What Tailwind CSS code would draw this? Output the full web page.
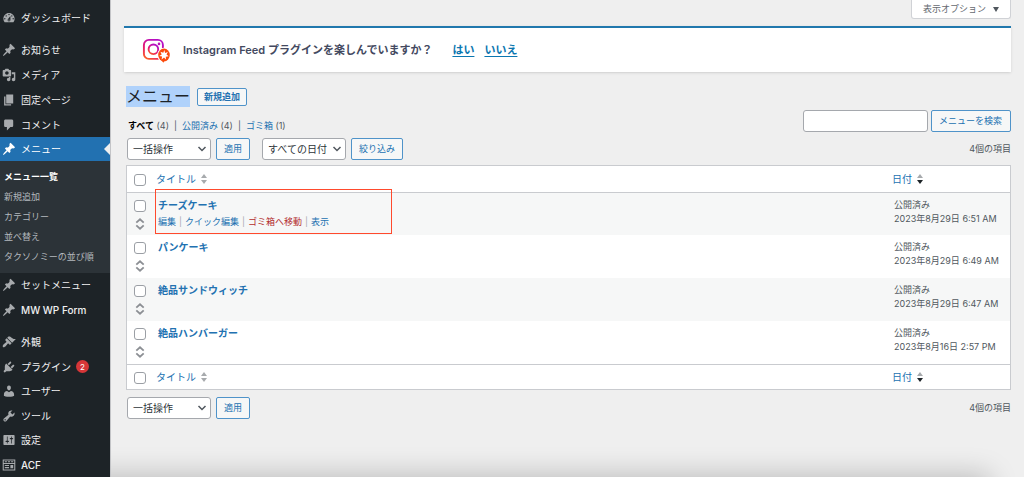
<!DOCTYPE html>
<html lang="ja">
<head>
<meta charset="utf-8">
<title>メニュー</title>
<meta name="viewport" content="width=device-width, initial-scale=1">
<script src="https://cdn.jsdelivr.net/npm/@tailwindcss/browser@4"></script>
</head>
<body class="flex min-h-screen bg-[#efefef] font-['Inter','Noto_Sans_CJK_JP',sans-serif] text-[9px] leading-[14px] text-[#50575e]">
<svg class="hidden" aria-hidden="true">
  <symbol id="i-dash" viewBox="0 0 20 20"><path fill-rule="evenodd" d="M3.76 16h12.48c1.1-1.37 1.76-3.11 1.76-5 0-4.42-3.58-8-8-8s-8 3.58-8 8c0 1.89.66 3.63 1.76 5zM10 4c.55 0 1 .45 1 1s-.45 1-1 1-1-.45-1-1 .45-1 1-1zM6 6c.55 0 1 .45 1 1s-.45 1-1 1-1-.45-1-1 .45-1 1-1zm8 0c.55 0 1 .45 1 1s-.45 1-1 1-1-.45-1-1 .45-1 1-1zm-5.37 5.55L12 7v6c0 1.1-.9 2-2 2s-2-.9-2-2c0-.57.24-1.08.63-1.45zM4 10c.55 0 1 .45 1 1s-.45 1-1 1-1-.45-1-1 .45-1 1-1zm12 0c.55 0 1 .45 1 1s-.45 1-1 1-1-.45-1-1 .45-1 1-1zm-5 3c0-.55-.45-1-1-1s-1 .45-1 1 .45 1 1 1 1-.45 1-1z"/></symbol>
  <symbol id="i-pin" viewBox="0 0 20 20"><path d="M10.44 3.02l1.82-1.82 6.36 6.35-1.83 1.82c-1.05-.68-2.48-.57-3.41.36l-.75.75c-.92.93-1.04 2.35-.35 3.41l-1.83 1.82-2.41-2.41-2.8 2.79c-.42.42-3.38 2.71-3.8 2.29s1.86-3.39 2.28-3.81l2.79-2.79L4.1 9.36l1.83-1.82c1.05.69 2.48.57 3.4-.36l.75-.75c.93-.92 1.05-2.35.36-3.41z"/></symbol>
  <symbol id="i-media" viewBox="0 0 20 20"><path fill-rule="evenodd" d="M13 11V4c0-.55-.45-1-1-1h-1.67L9 1H5L3.67 3H2c-.55 0-1 .45-1 1v7c0 .55.45 1 1 1h10c.55 0 1-.45 1-1zM7 4.5c1.38 0 2.5 1.12 2.5 2.5S8.38 9.5 7 9.5 4.5 8.38 4.5 7 5.62 4.5 7 4.5zM14 6h5v10.5c0 1.38-1.12 2.5-2.5 2.5S14 17.88 14 16.5s1.12-2.5 2.5-2.5c.17 0 .34.02.5.05V9h-3V6zm-4 8.05V13h2v3.5c0 1.38-1.12 2.5-2.5 2.5S7 17.88 7 16.5 8.12 14 9.5 14c.17 0 .34.02.5.05z"/></symbol>
  <symbol id="i-page" viewBox="0 0 20 20"><path d="M6 15V2h10v13H6zm-1 1h8v2H3V5h2v11z"/></symbol>
  <symbol id="i-comment" viewBox="0 0 20 20"><path d="M5 2h9c1.1 0 2 .9 2 2v7c0 1.1-.9 2-2 2h-2l-5 5v-5H5c-1.1 0-2-.9-2-2V4c0-1.1.9-2 2-2z"/></symbol>
  <symbol id="i-brush" viewBox="0 0 20 20"><path d="M14.48 11.06L7.41 3.99l1.5-1.5c.5-.56 2.3-.47 3.51.32 1.21.8 1.43 1.28 2.91 2.1 1.18.64 2.45 1.26 4.45.85zm-.71.71L6.7 4.7 4.93 6.47c-.39.39-.39 1.02 0 1.41l1.06 1.06c.39.39.39 1.03 0 1.42-.6.6-1.43 1.11-2.21 1.69-.35.26-.7.53-1.01.84C1.43 14.23.4 16.08 1.4 17.07c.99 1 2.84-.03 4.18-1.36.31-.31.58-.66.85-1.02.57-.78 1.08-1.61 1.69-2.21.39-.39 1.02-.39 1.41 0l1.06 1.06c.39.39 1.02.39 1.41 0z"/></symbol>
  <symbol id="i-plug" viewBox="0 0 20 20"><path d="M13.11 4.36L9.87 7.6 8 5.73l3.24-3.24c.35-.34 1.05-.2 1.56.32.52.51.66 1.21.31 1.55zm-8 1.77l.91-1.12 9.01 9.01-1.19.84c-.71.71-2.63 1.16-3.82 1.16H6.14L4.9 17.26c-.59.59-1.54.59-2.12 0-.59-.58-.59-1.53 0-2.12l1.24-1.24v-3.88c0-1.13.4-3.19 1.09-3.89zm7.26 3.97l3.24-3.24c.34-.35 1.04-.21 1.55.31.52.51.66 1.21.31 1.55l-3.24 3.25z"/></symbol>
  <symbol id="i-user" viewBox="0 0 20 20"><path d="M10 9.25c-2.27 0-2.73-3.44-2.73-3.44C7 4.02 7.82 2 9.97 2c2.16 0 2.98 2.02 2.71 3.81 0 0-.41 3.44-2.68 3.44zm0 2.57L12.72 10c2.39 0 4.52 2.33 4.52 4.53v2.49s-3.65 1.13-7.24 1.13c-3.65 0-7.24-1.13-7.24-1.13v-2.49c0-2.25 1.94-4.48 4.47-4.48z"/></symbol>
  <symbol id="i-tool" viewBox="0 0 20 20"><path fill-rule="evenodd" d="M16.68 9.77c-1.34 1.34-3.3 1.67-4.95.99l-5.41 6.52c-.99.99-2.59.99-3.58 0s-.99-2.59 0-3.57l6.52-5.42c-.68-1.65-.35-3.61.99-4.95 1.28-1.28 3.12-1.62 4.72-1.06l-2.89 2.89 2.82 2.82 2.86-2.87c.53 1.58.18 3.39-1.08 4.65zM3.81 16.21c.4.39 1.04.39 1.43 0 .4-.4.4-1.04 0-1.43-.39-.4-1.03-.4-1.43 0-.39.39-.39 1.03 0 1.43z"/></symbol>
  <symbol id="i-set" viewBox="0 0 20 20"><path fill-rule="evenodd" d="M18 16V4c0-.55-.45-1-1-1H3c-.55 0-1 .45-1 1v12c0 .55.45 1 1 1h14c.55 0 1-.45 1-1zM8 11h1c.55 0 1 .45 1 1s-.45 1-1 1H8v1.5c0 .28-.22.5-.5.5s-.5-.22-.5-.5V13H6c-.55 0-1-.45-1-1s.45-1 1-1h1V5.5c0-.28.22-.5.5-.5s.5.22.5.5V11zm5-2h-1c-.55 0-1-.45-1-1s.45-1 1-1h1V5.5c0-.28.22-.5.5-.5s.5.22.5.5V7h1c.55 0 1 .45 1 1s-.45 1-1 1h-1v5.500c0 .28-.22.5-.5.5s-.5-.22-.5-.5V9z"/></symbol>
  <symbol id="i-acf" viewBox="0 0 20 20"><path fill-rule="evenodd" d="M1 2h18v16H1zM2.500 3.500V7h15V3.500zM2.500 8.500v8h15v-8z"/><path d="M4 4.500h3v1.500H4zM8.500 4.500h3v1.500h-3zM13 4.500h3v1.500h-3zM4 10h6v1.500H4zM4 13h6v1.500H4zM12 10h4v4.500h-4z"/></symbol>
  <symbol id="i-down" viewBox="0 0 10 10"><path d="M1.500 3l3.500 3.500L8.500 3" fill="none" stroke="#50575e" stroke-width="1.500"/></symbol>
  <symbol id="i-updown" viewBox="0 0 10 12"><path d="M1.300 4.700L5 1.300l3.700 3.400M1.300 7.300L5 10.700l3.700-3.400" fill="none" stroke="#8c8f94" stroke-width="1.800"/></symbol>
  <symbol id="i-sort" viewBox="0 0 6 10"><path d="M0 4l3-4 3 4z" fill="#a7aaad"/><path d="M0 6h6l-3 4z" fill="currentColor"/></symbol>
</svg>

<aside class="w-[110px] shrink-0 bg-[#1d2327] pt-[6px] text-[10px] text-[#f0f0f1]">
  <nav aria-label="管理メニュー">
    <ul>
      <li><a href="#" class="flex h-6 items-center gap-[5px] pl-[2px]"><svg class="size-[14px] fill-[#a7aaad]"><use href="#i-dash"/></svg>ダッシュボード</a></li>
      <li class="mt-[7px]"><a href="#" class="flex h-[25px] items-center gap-[5px] pl-[2px]"><svg class="size-[14px] fill-[#a7aaad]"><use href="#i-pin"/></svg>お知らせ</a></li>
      <li><a href="#" class="flex h-[25px] items-center gap-[5px] pl-[2px]"><svg class="size-[14px] fill-[#a7aaad]"><use href="#i-media"/></svg>メディア</a></li>
      <li><a href="#" class="flex h-[25px] items-center gap-[5px] pl-[2px]"><svg class="size-[14px] fill-[#a7aaad]"><use href="#i-page"/></svg>固定ページ</a></li>
      <li><a href="#" class="flex h-[25px] items-center gap-[5px] pl-[2px]"><svg class="size-[14px] fill-[#a7aaad]"><use href="#i-comment"/></svg>コメント</a></li>
      <li>
        <a href="#" class="flex h-6 items-center gap-[5px] bg-[#2271b1] pl-[2px] text-white"><svg class="size-[14px] fill-white"><use href="#i-pin"/></svg>メニュー<svg class="ml-auto h-3 w-[6px] fill-[#efefef]" viewBox="0 0 6 12"><path d="M6 0v12L0 6z"/></svg></a>
        <ul class="bg-[#2c3338] py-[6px] text-[9px] text-[#b4b9be]">
          <li><a href="#" class="flex h-5 items-center pl-1 font-bold text-white">メニュー一覧</a></li>
          <li><a href="#" class="flex h-5 items-center pl-1">新規追加</a></li>
          <li><a href="#" class="flex h-5 items-center pl-1">カテゴリー</a></li>
          <li><a href="#" class="flex h-5 items-center pl-1">並べ替え</a></li>
          <li><a href="#" class="flex h-5 items-center pl-1">タクソノミーの並び順</a></li>
        </ul>
      </li>
      <li><a href="#" class="flex h-6 items-center gap-[5px] pl-[2px]"><svg class="size-[14px] fill-[#a7aaad]"><use href="#i-pin"/></svg>セットメニュー</a></li>
      <li><a href="#" class="flex h-[25px] items-center gap-[5px] pl-[2px] font-medium"><svg class="size-[14px] fill-[#a7aaad]"><use href="#i-pin"/></svg>MW WP Form</a></li>
      <li class="mt-2"><a href="#" class="flex h-6 items-center gap-[5px] pl-[2px]"><svg class="size-[14px] fill-[#a7aaad]"><use href="#i-brush"/></svg>外観</a></li>
      <li><a href="#" class="flex h-[25px] items-center gap-[5px] pl-[2px]"><svg class="size-[14px] fill-[#a7aaad]"><use href="#i-plug"/></svg>プラグイン<span class="flex size-[13px] items-center justify-center rounded-full bg-[#d63638] text-[8px] text-white">2</span></a></li>
      <li><a href="#" class="flex h-6 items-center gap-[5px] pl-[2px]"><svg class="size-[14px] fill-[#a7aaad]"><use href="#i-user"/></svg>ユーザー</a></li>
      <li><a href="#" class="flex h-[25px] items-center gap-[5px] pl-[2px]"><svg class="size-[14px] fill-[#a7aaad]"><use href="#i-tool"/></svg>ツール</a></li>
      <li><a href="#" class="flex h-6 items-center gap-[5px] pl-[2px]"><svg class="size-[14px] fill-[#a7aaad]"><use href="#i-set"/></svg>設定</a></li>
      <li><a href="#" class="flex h-[25px] items-center gap-[5px] pl-[2px] font-medium"><svg class="size-[14px] fill-[#a7aaad]"><use href="#i-acf"/></svg>ACF</a></li>
    </ul>
  </nav>
</aside>

<main class="relative flex min-w-0 flex-1 flex-col border-l border-[#c3c4c7] pr-[13px] pl-[13px]">
  <div class="flex justify-end">
    <button type="button" class="flex h-[19px] items-center gap-[7px] rounded-b-[3px] border border-t-0 border-[#d0d2d6] bg-white px-[11px] text-[#646970]">表示オプション<svg class="h-[5px] w-[6px] fill-[#50575e]" viewBox="0 0 6 5"><path d="M0 0h6L3 5z"/></svg></button>
  </div>

  <section class="mt-[7px] flex h-[46px] items-center border-t-2 border-[#2178ad] bg-white pl-[18px] text-[11px] font-semibold text-[#434960] shadow-sm">
    <svg class="h-[26px] w-[29px]" viewBox="0 0 29 26" aria-hidden="true">
      <defs><linearGradient id="ig" x1="0" y1="1" x2="0.600" y2="0"><stop offset="0" stop-color="#ff6a1a"/><stop offset="0.450" stop-color="#e6186d"/><stop offset="1" stop-color="#b50fc4"/></linearGradient></defs>
      <rect x="1.900" y="2.900" width="19" height="19" rx="5" fill="none" stroke="url(#ig)" stroke-width="1.900"/>
      <circle cx="11.400" cy="12.300" r="4.800" fill="none" stroke="url(#ig)" stroke-width="1.900"/>
      <circle cx="17" cy="6.900" r="1.300" fill="#b915b5"/>
      <ellipse cx="22" cy="18" rx="6.700" ry="7.300" fill="#fff"/>
      <ellipse cx="22" cy="18" rx="5.800" ry="6.400" fill="#fb4a0c"/>
      <path d="M19.500 23.500l2 2.300.8-2z" fill="#fb4a0c"/>
      <path d="M22.300 13l.8 2.900 2.800-.9-1.400 2.500 2.200 1.800-2.900.4.200 2.900-2-2-2.400 1.900.5-2.900-2.900-.6 2.500-1.600-1.300-2.600 2.900.9z" fill="#fff"/>
    </svg>
    <p class="ml-3">Instagram Feed プラグインを楽しんでいますか？</p>
    <a href="#" class="ml-5 font-bold text-[#0b76b0] underline underline-offset-2">はい</a>
    <a href="#" class="ml-[10px] font-bold text-[#0b76b0] underline underline-offset-2">いいえ</a>
  </section>

  <div class="mt-[14px] flex items-center gap-[7px] pl-[2px]">
    <h1 class="bg-[#b0d2fb] text-[16px] leading-[21px] text-[#1d2327]">メニュー</h1>
    <a href="#" class="flex h-[18px] items-center rounded-[2px] border border-[#4f93c9] bg-[#f6f7f7] px-[6px] font-semibold text-[#2271b1]">新規追加</a>
  </div>

  <div class="flex items-start justify-between pl-[2px]">
    <ul class="mt-3 flex gap-[5px] pl-[2px]">
      <li><a href="#" class="font-bold text-black">すべて</a> (4)</li>
      <li aria-hidden="true">|</li>
      <li><a href="#" class="text-[#2271b1]">公開済み</a> (4)</li>
      <li aria-hidden="true">|</li>
      <li><a href="#" class="text-[#2271b1]">ゴミ箱</a> (1)</li>
    </ul>
    <form class="mt-[3px] flex gap-[3px]">
      <input type="search" aria-label="メニューを検索" class="h-[22px] w-[125px] rounded-[3px] border border-[#a5a8ad] bg-white px-2">
      <button type="button" class="h-[22px] rounded-[2px] border border-[#4f93c9] bg-[#f6f7f7] pr-2 pl-[7px] text-[#2271b1]">メニューを検索</button>
    </form>
  </div>

  <div class="mt-[5px] flex items-center pl-[3px]">
    <div class="relative">
      <select aria-label="一括操作を選択" class="block h-[22px] w-[84px] appearance-none rounded-[3px] border border-[#a5a8ad] bg-white pl-[5px] text-[10px] text-[#2c3338]"><option>一括操作</option></select>
      <svg class="pointer-events-none absolute top-[6px] right-[4px] size-[10px]"><use href="#i-down"/></svg>
    </div>
    <button type="button" class="ml-[5px] h-[22px] rounded-[2px] border border-[#4f93c9] bg-[#f6f7f7] px-[7px] text-[#2271b1]">適用</button>
    <div class="relative ml-3">
      <select aria-label="日付で絞り込む" class="block h-[22px] w-[84px] appearance-none rounded-[3px] border border-[#a5a8ad] bg-white pl-[5px] text-[10px] text-[#2c3338]"><option>すべての日付</option></select>
      <svg class="pointer-events-none absolute top-[6px] right-[4px] size-[10px]"><use href="#i-down"/></svg>
    </div>
    <button type="button" class="ml-[5px] h-[22px] rounded-[2px] border border-[#4f93c9] bg-[#f6f7f7] px-[7px] text-[#2271b1]">絞り込み</button>
    <span class="ml-auto">4個の項目</span>
  </div>

  <div class="relative mt-[5px] ml-[2px] border border-[#c9cbcf] bg-white">
    <table class="w-full table-fixed border-collapse text-left">
      <colgroup><col class="w-[27px]"><col><col class="w-[121px]"></colgroup>
      <thead>
        <tr class="h-[26px] border-b border-[#c9cbcf] text-[10px] text-[#2271b1]">
          <th class="pl-[7px] align-middle"><input type="checkbox" aria-label="すべて選択" class="mt-[2px] block size-3 appearance-none rounded-[3px] border border-[#9b9fa5] bg-white"></th>
          <th class="pl-[2px] font-normal"><a href="#" class="flex items-center gap-[5px]">タイトル<svg class="h-[10px] w-[6px] text-[#a7aaad]"><use href="#i-sort"/></svg></a></th>
          <th class="pl-[3px] font-normal"><a href="#" class="flex items-center gap-[5px]">日付<svg class="h-[10px] w-[6px] text-[#1d2327]"><use href="#i-sort"/></svg></a></th>
        </tr>
      </thead>
      <tbody class="align-top">
        <tr class="h-[43px] bg-[#f6f7f7]">
          <td class="pt-[7px] pl-[7px]"><input type="checkbox" aria-label="チーズケーキを選択" class="block size-3 appearance-none rounded-[3px] border border-[#9b9fa5] bg-white"><svg class="mt-[6px] ml-[1px] h-3 w-[10px]"><use href="#i-updown"/></svg></td>
          <td class="pt-[5px] pl-1"><a href="#" class="block text-[10px] font-bold text-[#2271b1]">チーズケーキ</a>
            <div class="mt-[3px] flex gap-[3px] text-[#a7aaad]"><a href="#" class="text-[#2271b1]">編集</a>|<button type="button" class="text-[#2271b1]">クイック編集</button>|<a href="#" class="text-[#b32d2e]">ゴミ箱へ移動</a>|<a href="#" class="text-[#2271b1]">表示</a></div></td>
          <td class="pt-[5px] pl-[5px]">公開済み<br>2023年8月29日 6:51 AM</td>
        </tr>
        <tr class="h-[43px]">
          <td class="pt-[7px] pl-[7px]"><input type="checkbox" aria-label="パンケーキを選択" class="block size-3 appearance-none rounded-[3px] border border-[#9b9fa5] bg-white"><svg class="mt-[6px] ml-[1px] h-3 w-[10px]"><use href="#i-updown"/></svg></td>
          <td class="pt-[5px] pl-1"><a href="#" class="block text-[10px] font-bold text-[#2271b1]">パンケーキ</a></td>
          <td class="pt-[5px] pl-[5px]">公開済み<br>2023年8月29日 6:49 AM</td>
        </tr>
        <tr class="h-[43px] bg-[#f6f7f7]">
          <td class="pt-[7px] pl-[7px]"><input type="checkbox" aria-label="絶品サンドウィッチを選択" class="block size-3 appearance-none rounded-[3px] border border-[#9b9fa5] bg-white"><svg class="mt-[6px] ml-[1px] h-3 w-[10px]"><use href="#i-updown"/></svg></td>
          <td class="pt-[5px] pl-1"><a href="#" class="block text-[10px] font-bold text-[#2271b1]">絶品サンドウィッチ</a></td>
          <td class="pt-[5px] pl-[5px]">公開済み<br>2023年8月29日 6:47 AM</td>
        </tr>
        <tr class="h-[43px]">
          <td class="pt-[7px] pl-[7px]"><input type="checkbox" aria-label="絶品ハンバーガーを選択" class="block size-3 appearance-none rounded-[3px] border border-[#9b9fa5] bg-white"><svg class="mt-[6px] ml-[1px] h-3 w-[10px]"><use href="#i-updown"/></svg></td>
          <td class="pt-[5px] pl-1"><a href="#" class="block text-[10px] font-bold text-[#2271b1]">絶品ハンバーガー</a></td>
          <td class="pt-[5px] pl-[5px]">公開済み<br>2023年8月16日 2:57 PM</td>
        </tr>
      </tbody>
      <tfoot>
        <tr class="h-[25px] border-t border-[#c9cbcf] text-[10px] text-[#2271b1]">
          <th class="pl-[7px] align-middle"><input type="checkbox" aria-label="すべて選択" class="mt-[2px] block size-3 appearance-none rounded-[3px] border border-[#9b9fa5] bg-white"></th>
          <th class="pl-[2px] font-normal"><a href="#" class="flex items-center gap-[5px]">タイトル<svg class="h-[10px] w-[6px] text-[#a7aaad]"><use href="#i-sort"/></svg></a></th>
          <th class="pl-[3px] font-normal"><a href="#" class="flex items-center gap-[5px]">日付<svg class="h-[10px] w-[6px] text-[#1d2327]"><use href="#i-sort"/></svg></a></th>
        </tr>
      </tfoot>
    </table>
    <div class="pointer-events-none absolute top-[23px] left-7 h-[45px] w-[237px] border border-current text-[#ff4a2d]"></div>
  </div>

  <div class="mt-[7px] flex items-center pl-[3px]">
    <div class="relative">
      <select aria-label="一括操作を選択" class="block h-[22px] w-[84px] appearance-none rounded-[3px] border border-[#a5a8ad] bg-white pl-[5px] text-[10px] text-[#2c3338]"><option>一括操作</option></select>
      <svg class="pointer-events-none absolute top-[6px] right-[4px] size-[10px]"><use href="#i-down"/></svg>
    </div>
    <button type="button" class="ml-[5px] h-[22px] rounded-[2px] border border-[#4f93c9] bg-[#f6f7f7] px-[7px] text-[#2271b1]">適用</button>
    <span class="ml-auto">4個の項目</span>
  </div>
  <div class="pointer-events-none absolute right-0 bottom-0 left-0 h-8 overflow-hidden"><div class="mt-8 mr-9 -ml-8 h-10 shadow-[0_0_28px_2px_rgba(0,0,0,0.22)]"></div></div>
</main>
</body>
</html>
